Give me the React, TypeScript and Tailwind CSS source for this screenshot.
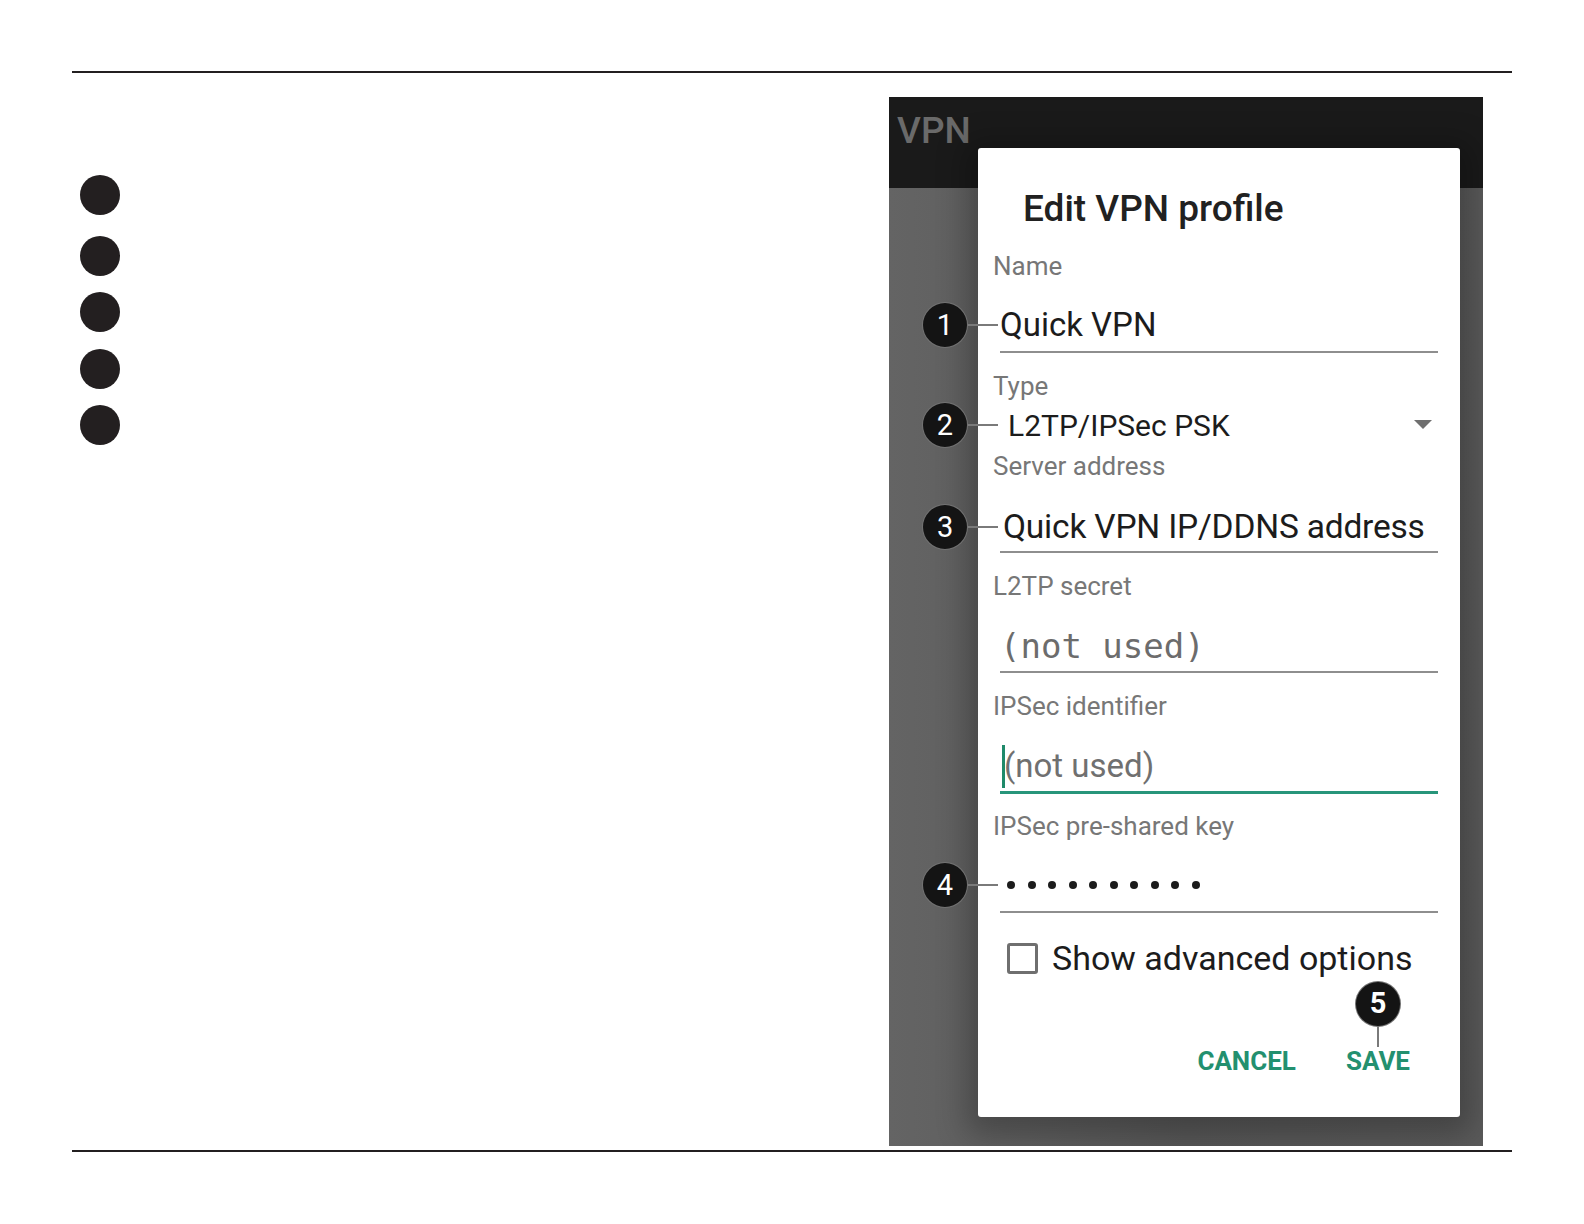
import React from 'react';

const ROBOTO = { fontFamily: 'Roboto, "Noto Sans", sans-serif' };

function Marker({ n, className = '' }: { n: number; className?: string }) {
  return (
    <div
      className={`w-[46px] h-[46px] rounded-full bg-[#141414] border border-white/40 flex items-center justify-center text-white text-[29px] leading-none ${className}`}
    >
      {n}
    </div>
  );
}

// numbered callout sitting left of a field, with the short connector line
function Callout({ n }: { n: number }) {
  return (
    <div className="absolute left-[-78px] top-1/2 -translate-y-1/2 flex items-center">
      <Marker n={n} />
      <div className="w-[30px] h-[2px] bg-[#7a7a7a]" />
    </div>
  );
}

function Label({ text, className = '' }: { text: string; className?: string }) {
  return (
    <div className={`h-[32px] pl-[15px] flex items-center text-[26px] text-[#777777] ${className}`}>{text}</div>
  );
}

function Underline({ className = '' }: { className?: string }) {
  return <div className={`mx-[22px] h-[2px] bg-[#8e8e8e] ${className}`} />;
}

export default function App() {
  return (
    <div className="w-[1584px] h-[1224px] bg-white px-[72px] pt-[71px] flex flex-col" style={ROBOTO}>
      <div className="h-[2px] bg-[#231f20]" />

      <div className="h-[1077px] flex justify-between">
        <div className="pl-[8px] pt-[102px] flex flex-col">
          <div className="w-[40px] h-[40px] rounded-full bg-[#231f20]" />
          <div className="w-[40px] h-[40px] rounded-full bg-[#231f20] mt-[21px]" />
          <div className="w-[40px] h-[40px] rounded-full bg-[#231f20] mt-[16px]" />
          <div className="w-[40px] h-[40px] rounded-full bg-[#231f20] mt-[17px]" />
          <div className="w-[40px] h-[40px] rounded-full bg-[#231f20] mt-[16px]" />
        </div>

        {/* phone screenshot */}
        <div className="mt-[24px] mr-[29px] w-[594px] h-[1049px] grid overflow-hidden">
          <div className="col-start-1 row-start-1 flex flex-col">
            <div className="h-[91px] bg-[#1a1a1a] pl-[8px] pt-[14px]">
              <span className="text-[37px] font-medium text-[#6a6a6a] leading-[40px]">VPN</span>
            </div>
            <div className="flex-1 bg-gradient-to-r from-[#646464] via-[#575757] to-[#5a5a5a]" />
          </div>

          <div className="col-start-1 row-start-1 ml-[89px] mt-[51px] w-[482px] h-[969px] bg-white rounded-[3px] shadow-[0_6px_30px_12px_rgba(0,0,0,0.25)] flex flex-col">
            <div className="mt-[39px] h-[44px] pl-[45px] flex items-center text-[37px] font-medium text-[#212121]">
              Edit VPN profile
            </div>

            <Label text="Name" className="mt-[19px]" />
            <div className="relative mt-[21px] ml-[22px] h-[44px] flex items-center text-[33px] text-[#1c1c1c]">
              <Callout n={1} />
              Quick VPN
            </div>
            <Underline className="mt-[4px]" />

            <Label text="Type" className="mt-[17px]" />
            <div className="relative mt-[1px] ml-[22px] mr-[22px] h-[44px] pl-[8px] flex items-center justify-between text-[30px] text-[#1c1c1c]">
              <Callout n={2} />
              <span>L2TP/IPSec PSK</span>
              <svg width="18" height="10" viewBox="0 0 18 10" className="mr-[6px]">
                <path d="M0 0 L18 0 L9 9 Z" fill="#6f6f6f" />
              </svg>
            </div>

            <Label text="Server address" className="mt-[3px]" />
            <div className="relative mt-[23px] ml-[22px] h-[44px] pl-[3px] flex items-center text-[33.5px] tracking-[-0.2px] text-[#1c1c1c]">
              <Callout n={3} />
              Quick VPN IP/DDNS address
            </div>
            <Underline className="mt-[2px]" />

            <Label text="L2TP secret" className="mt-[17px]" />
            <div
              className="mt-[22px] ml-[22px] h-[44px] flex items-center text-[34px] text-[#6c6c6c]"
              style={{ fontFamily: '"DejaVu Sans Mono", "Liberation Mono", monospace' }}
            >
              (not used)
            </div>
            <Underline className="mt-[3px]" />

            <Label text="IPSec identifier" className="mt-[17px]" />
            <div className="mt-[22px] ml-[24px] h-[44px] flex items-center text-[33px] text-[#707070]">
              <span className="w-[3px] h-[43px] bg-[#1f8a6a] mr-[-1px]" />
              (not used)
            </div>
            <div className="mt-[3px] mx-[22px] h-[3px] bg-[#27957a]" />

            <Label text="IPSec pre-shared key" className="mt-[16px]" />
            <div className="relative mt-[21px] ml-[22px] h-[44px] pl-[7px] flex items-center gap-[12.5px]">
              <Callout n={4} />
              {Array.from({ length: 10 }).map((_, i) => (
                <span key={i} className="w-[8px] h-[8px] rounded-full bg-[#1c1c1c]" />
              ))}
            </div>
            <Underline className="mt-[4px]" />

            <div className="mt-[25px] h-[40px] pl-[29px] flex items-center gap-[14px]">
              <span className="w-[31px] h-[31px] border-[3px] border-[#6f6f6f] rounded-[3px]" />
              <span className="text-[34px] text-[#1c1c1c]">Show advanced options</span>
            </div>

            <div className="mt-[67px] h-[32px] pr-[50px] flex items-center justify-end gap-[50px] text-[26px] font-bold text-[#23906f]">
              <span>CANCEL</span>
              <span className="relative">
                SAVE
                <div className="absolute left-1/2 -translate-x-1/2 bottom-[34px] flex flex-col items-center">
                  <Marker n={5} />
                  <div className="w-[2px] h-[20px] bg-[#7a7a7a]" />
                </div>
              </span>
            </div>
          </div>
        </div>
      </div>

      <div className="h-[2px] bg-[#231f20]" />
    </div>
  );
}
